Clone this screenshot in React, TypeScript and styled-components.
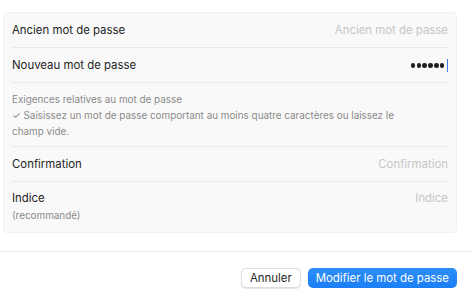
import React from "react";
import styled, { createGlobalStyle } from "styled-components";

const Global = createGlobalStyle`
  html, body {
    margin: 0;
    padding: 0;
    background: #ffffff;
  }
  body {
    font-family: Inter, "Helvetica Neue", "Liberation Sans", sans-serif;
    color: #232323;
    -webkit-font-smoothing: antialiased;
  }
`;

const Page = styled.div`
  width: 473px;
  height: 300px;
  display: flex;
  flex-direction: column;
  padding-top: 12px;
  box-sizing: border-box;
`;

const Card = styled.div`
  margin: 0 16px 0 3px;
  background: #f9f9f9;
  border: 1px solid #f1f1f1;
  border-radius: 4px;
  padding: 0 8px;
  display: flex;
  flex-direction: column;
`;

const Row = styled.div<{ $tall?: boolean }>`
  display: flex;
  justify-content: space-between;
  align-items: ${(p) => (p.$tall ? "flex-start" : "center")};
  height: ${(p) => (p.$tall ? "50px" : "35px")};
  padding-top: ${(p) => (p.$tall ? "9px" : "0")};
  box-sizing: border-box;
  border-bottom: 1px solid #e9e9e9;
  &:last-child {
    border-bottom: none;
  }
`;

const LabelBox = styled.div`
  display: flex;
  flex-direction: column;
  gap: 1px;
`;

const Label = styled.span`
  font-size: 11.4px;
  line-height: 15px;
  color: #242424;
`;

const Placeholder = styled.span`
  font-size: 11.4px;
  line-height: 15px;
  color: #c6c6c6;
`;

const Small = styled.span`
  font-size: 9.9px;
  color: #8a8a8a;
  line-height: 16px;
  max-width: 400px;
`;

const Requirements = styled.div`
  padding: 8px 0 7px;
  border-bottom: 1px solid #e9e9e9;
  display: flex;
  flex-direction: column;
`;

const Dots = styled.span`
  display: flex;
  align-items: center;
  gap: 1.2px;
  padding-top: 1px;
`;

const Dot = styled.span`
  width: 4.6px;
  height: 4.6px;
  border-radius: 50%;
  background: #1e1e1e;
`;

const Caret = styled.span`
  width: 1.5px;
  height: 13px;
  background: #3b7cf5;
  margin-left: 1px;
`;

const Divider = styled.div`
  margin-top: 18px;
  height: 1px;
  background: #ededed;
`;

const Footer = styled.div`
  display: flex;
  justify-content: flex-end;
  gap: 7px;
  padding: 16px 16px 0 0;
`;

const Button = styled.button<{ $primary?: boolean }>`
  height: 20px;
  padding: 0 8px;
  font-family: inherit;
  font-size: 11.4px;
  border-radius: 5px;
  border: ${(p) => (p.$primary ? "none" : "1px solid #dedede")};
  background: ${(p) => (p.$primary ? "linear-gradient(#2e8ef8, #1b7ef5)" : "#ffffff")};
  color: ${(p) => (p.$primary ? "#ffffff" : "#262626")};
  box-shadow: ${(p) => (p.$primary ? "none" : "0 0.5px 1px rgba(0,0,0,0.1)")};
  cursor: pointer;
`;

export default function App() {
  return (
    <>
      <Global />
      <Page>
        <Card>
          <Row>
            <Label>Ancien mot de passe</Label>
            <Placeholder>Ancien mot de passe</Placeholder>
          </Row>
          <Row>
            <Label>Nouveau mot de passe</Label>
            <Dots>
              {Array.from({ length: 6 }).map((_, i) => (
                <Dot key={i} />
              ))}
              <Caret />
            </Dots>
          </Row>
          <Requirements>
            <Small>Exigences relatives au mot de passe</Small>
            <Small>
              ✓ Saisissez un mot de passe comportant au moins quatre caractères ou laissez le
              champ vide.
            </Small>
          </Requirements>
          <Row>
            <Label>Confirmation</Label>
            <Placeholder>Confirmation</Placeholder>
          </Row>
          <Row $tall>
            <LabelBox>
              <Label>Indice</Label>
              <Small>(recommandé)</Small>
            </LabelBox>
            <Placeholder>Indice</Placeholder>
          </Row>
        </Card>
        <Divider />
        <Footer>
          <Button>Annuler</Button>
          <Button $primary>Modifier le mot de passe</Button>
        </Footer>
      </Page>
    </>
  );
}
